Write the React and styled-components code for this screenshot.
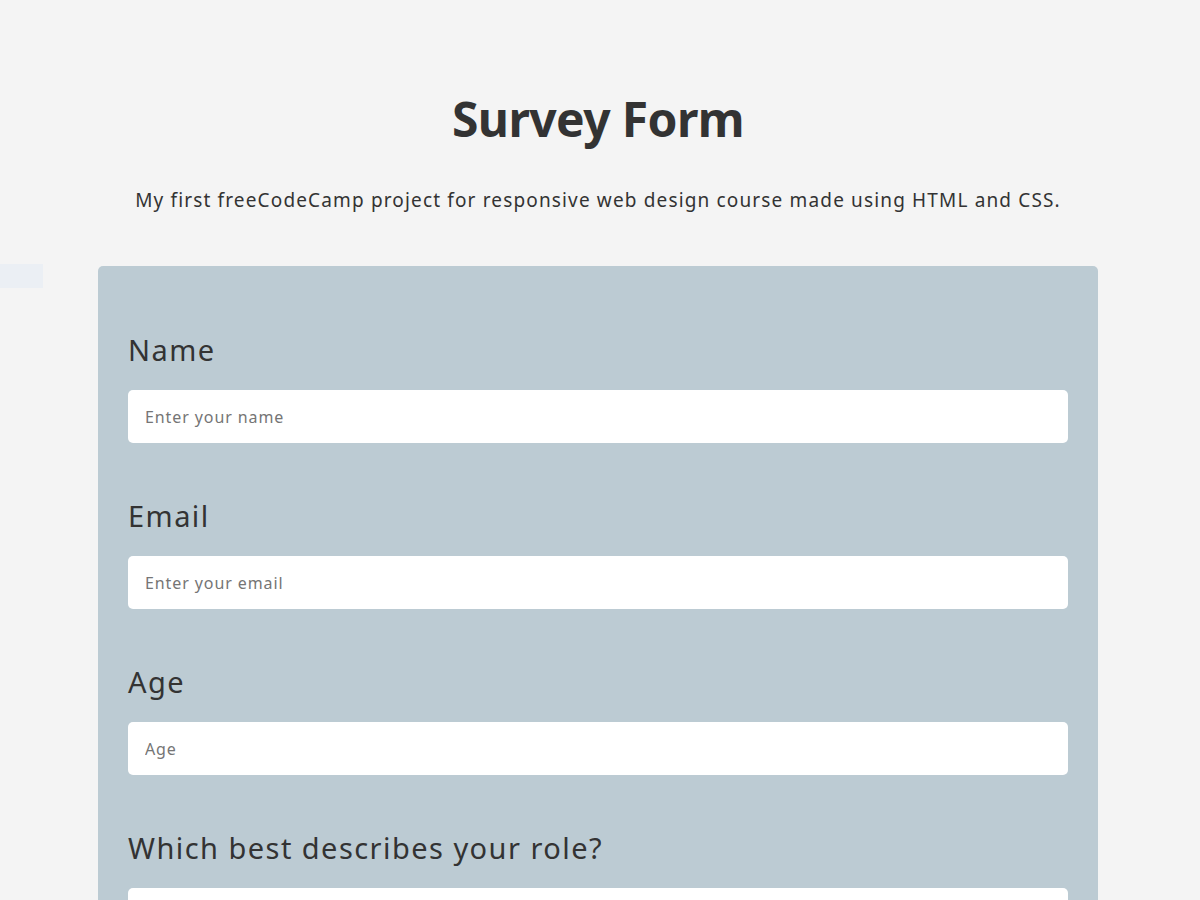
import styled, { createGlobalStyle } from "styled-components";

const GlobalStyle = createGlobalStyle`
  * {
    box-sizing: border-box;
  }
  body {
    margin: 0;
    background-color: #f4f4f4;
    color: #333;
    font-family: "Noto Sans", "Open Sans", sans-serif;
  }
`;

const Page = styled.div`
  position: relative;
  padding: 0 4px 60px 0;
`;

const SideTab = styled.div`
  position: absolute;
  top: 264px;
  left: 0;
  width: 43px;
  height: 24px;
  background-color: #ebeff4;
`;

const Header = styled.header`
  text-align: center;
  padding-top: 86px;
`;

const Title = styled.h1`
  margin: 0;
  font-family: "Noto Sans", sans-serif;
  font-weight: 700;
  font-size: 48px;
  line-height: 66px;
  letter-spacing: -0.6px;
  color: #333;
`;

const Description = styled.p`
  margin: 35px 0 0;
  font-size: 19px;
  line-height: 26px;
  font-weight: 400;
  letter-spacing: 1.15px;
  color: #333;
`;

const Form = styled.form`
  width: 1000px;
  margin: 53px auto 0;
  padding: 64px 30px 30px;
  background-color: #bccbd3;
  border-radius: 5px;
`;

const FormGroup = styled.div`
  margin-bottom: 53px;
`;

const Label = styled.label`
  display: block;
  font-size: 29px;
  line-height: 40px;
  font-weight: 400;
  letter-spacing: 1.45px;
  color: #333;
  margin-bottom: 20px;
`;

const Input = styled.input`
  display: block;
  width: 100%;
  height: 53px;
  padding: 0 17px;
  border: none;
  border-radius: 5px;
  background-color: #fff;
  font-family: "Noto Sans", sans-serif;
  font-size: 16px;
  letter-spacing: 0.9px;
  color: #333;
  outline: none;

  &::placeholder {
    color: #757575;
  }
`;

const Select = styled.select`
  display: block;
  width: 100%;
  height: 53px;
  padding: 0 16px;
  border: none;
  border-radius: 5px;
  background-color: #fff;
  font-family: "Noto Sans", sans-serif;
  font-size: 16px;
  letter-spacing: 0.9px;
  color: #333;
`;

const App = () => {
  return (
    <>
      <GlobalStyle />
      <Page>
        <SideTab />
        <Header>
          <Title>Survey Form</Title>
          <Description>
            My first freeCodeCamp project for responsive web design course
            made using HTML and CSS.
          </Description>
        </Header>

        <Form>
          <FormGroup>
            <Label htmlFor="name">Name</Label>
            <Input id="name" type="text" placeholder="Enter your name" />
          </FormGroup>
          <FormGroup>
            <Label htmlFor="email">Email</Label>
            <Input id="email" type="email" placeholder="Enter your email" />
          </FormGroup>
          <FormGroup>
            <Label htmlFor="age">Age</Label>
            <Input id="age" type="number" placeholder="Age" />
          </FormGroup>
          <FormGroup>
            <Label htmlFor="role">Which best describes your role?</Label>
            <Select id="role" defaultValue="">
              <option value="" disabled>
                Select current role
              </option>
              <option value="student">Student</option>
              <option value="job">Full Time Job</option>
              <option value="learner">Full Time Learner</option>
              <option value="other">Other</option>
            </Select>
          </FormGroup>
        </Form>
      </Page>
    </>
  );
};

export default App;
